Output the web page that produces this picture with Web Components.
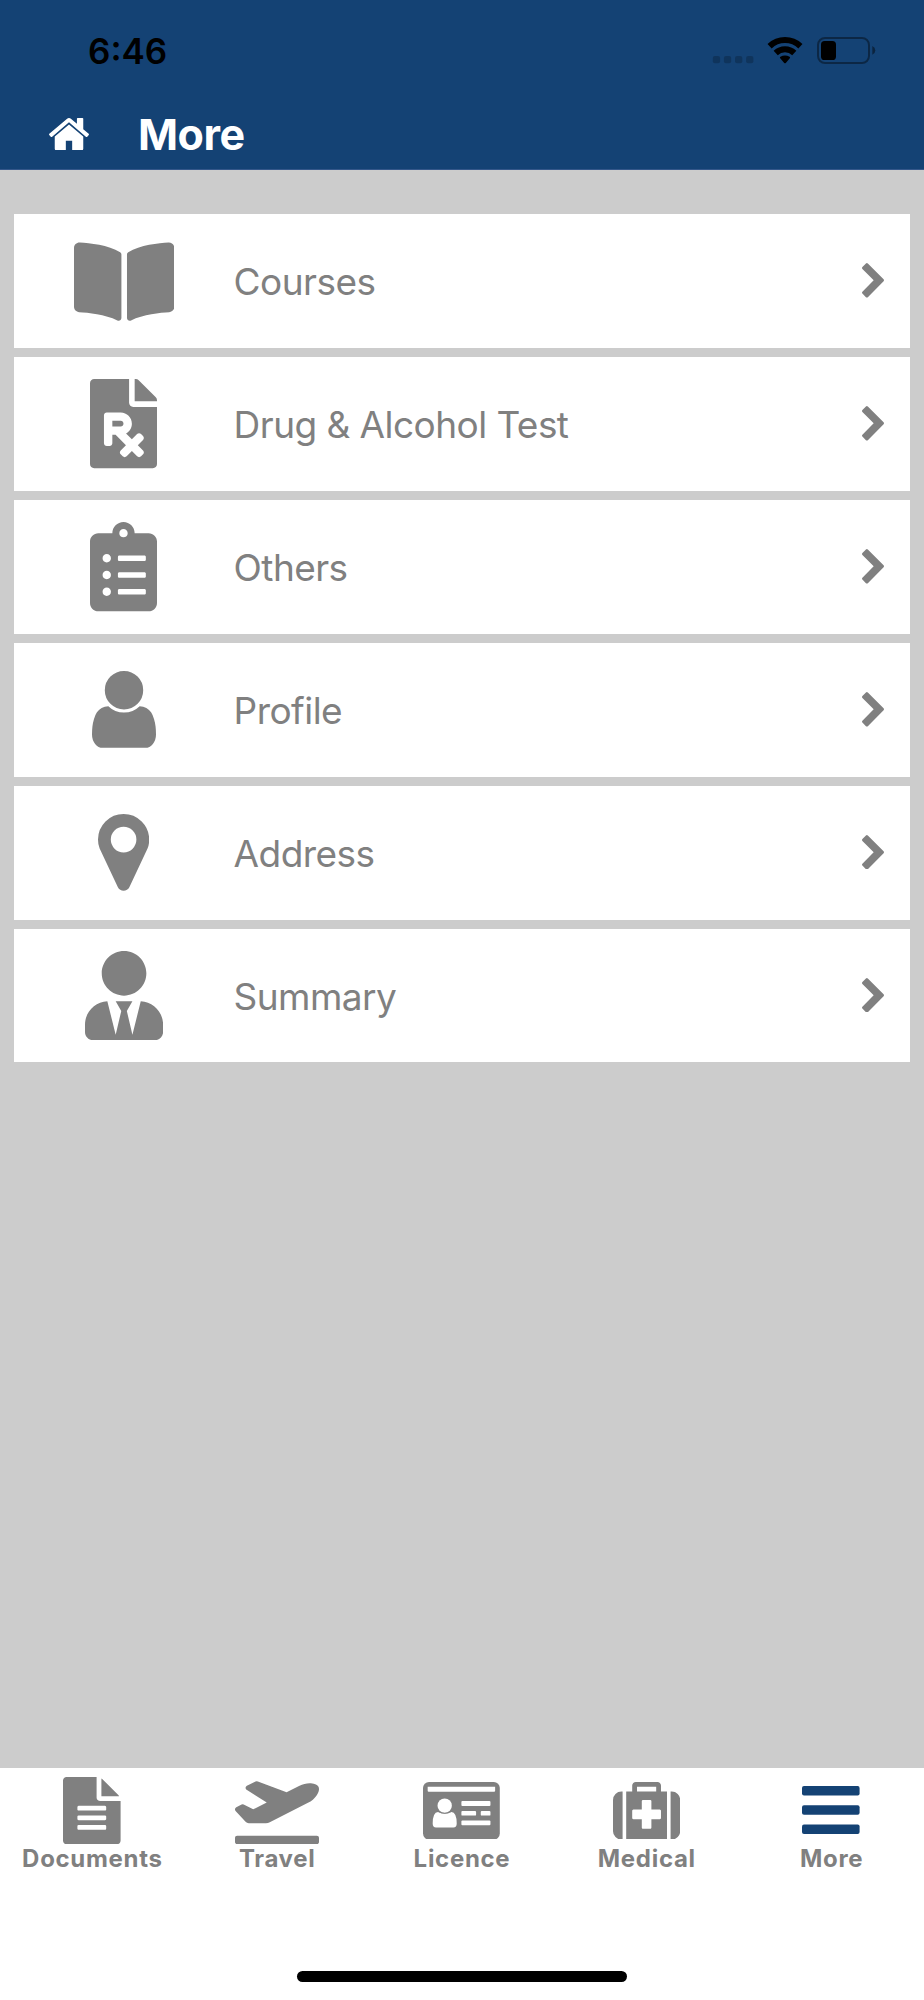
<!DOCTYPE html>
<html lang="en">
<head>
<meta charset="utf-8">
<title>More</title>
<style>
  :root {
    --brand: #144274;
    --page: #cccccc;
    --muted: #808080;
  }
  body {
    margin: 0;
    font-family: Inter, "Liberation Sans", sans-serif;
  }
</style>
</head>
<body>
<app-screen>
  <status-bar slot="header" time="6:46"></status-bar>
  <title-bar slot="header">More</title-bar>

  <menu-row icon="book">Courses</menu-row>
  <menu-row icon="prescription">Drug &amp; Alcohol Test</menu-row>
  <menu-row icon="clipboard">Others</menu-row>
  <menu-row icon="user">Profile</menu-row>
  <menu-row icon="marker">Address</menu-row>
  <menu-row icon="tie">Summary</menu-row>

  <tab-item slot="tabs" icon="document">Documents</tab-item>
  <tab-item slot="tabs" icon="plane">Travel</tab-item>
  <tab-item slot="tabs" icon="card">Licence</tab-item>
  <tab-item slot="tabs" icon="medkit">Medical</tab-item>
  <tab-item slot="tabs" icon="bars" active>More</tab-item>
</app-screen>

<script>
// name: [viewBox, width, height, markup]
const ICONS = {
  home: ['88 253 1616 1283', 40, 32.4, '<path d="M1472 992v480q0 26-19 45t-45 19h-384v-384h-256v384h-384q-26 0-45-19t-19-45v-480q0-1 .5-3t.5-3l575-474 575 474q1 2 1 6zm223-69l-62 74q-8 9-21 11h-3q-13 0-21-7l-692-577-692 577q-12 8-24 7-13-2-21-11l-62-74q-8-10-7-23.5t11-21.5l719-599q32-26 76-26t76 26l244 204v-195q0-14 9-23t23-9h192q14 0 23 9t9 23v408l219 182q10 8 11 21.5t-7 23.5z"/>'],
  chevron: ['346 26 1036 1612', 22, 34.6, '<path d="M1363 877l-742 742q-19 19-45 19t-45-19l-166-166q-19-19-19-45t19-45l531-531-531-531q-19-19-19-45t19-45l166-166q19-19 45-19t45 19l742 742q19 19 19 45t-19 45z"/>'],
  book: ['0 0 576 512', 100.4, 89.3, '<path d="M542.22 32.05c-54.8 3.11-163.72 14.43-230.96 55.59-4.64 2.84-7.27 7.89-7.27 13.17v363.87c0 11.55 12.63 18.85 23.28 13.49 69.18-34.82 169.23-44.32 218.7-46.92 16.89-.89 30.02-14.43 30.02-30.66V62.75c.01-17.71-15.35-31.74-33.77-30.7zM264.73 87.64C197.5 46.48 88.58 35.17 33.78 32.05 15.36 31.01 0 45.04 0 62.75V400.6c0 16.24 13.13 29.78 30.02 30.66 49.49 2.6 149.59 12.11 218.77 46.95 10.62 5.35 23.21-1.94 23.21-13.46V100.63c0-5.29-2.62-10.14-7.27-12.99z"/>'],
  prescription: ['0 0 384 512', 67, 89.3, '<path fill-rule="evenodd" d="M224 136V0H24C10.7 0 0 10.7 0 24v464c0 13.3 10.7 24 24 24h336c13.3 0 24-10.7 24-24V160H248c-13.2 0-24-10.8-24-24zm68.53 179.48l11.31 11.31c6.25 6.25 6.25 16.38 0 22.63l-29.9 29.9L304 409.38c6.25 6.25 6.25 16.38 0 22.63l-11.31 11.31c-6.25 6.25-16.38 6.25-22.63 0L240 413.25l-30.06 30.06c-6.25 6.25-16.38 6.25-22.63 0L176 432c-6.25-6.25-6.25-16.38 0-22.63l30.06-30.06L146.74 320H128v48c0 8.84-7.16 16-16 16H96c-8.84 0-16-7.16-16-16V208c0-8.84 7.16-16 16-16h80c35.35 0 64 28.65 64 64 0 24.22-13.62 45.05-33.46 55.92L240 345.38l29.9-29.9c6.25-6.25 16.38-6.25 22.63 0zM176 272h-48v-32h48c8.82 0 16 7.18 16 16s-7.18 16-16 16zm208-150.1v6.1H256V0h6.1c6.4 0 12.5 2.5 17 7l97.9 98c4.5 4.5 7 10.6 7 16.9z"/>'],
  clipboard: ['0 0 384 512', 67, 89.3, '<path d="M336 64h-80c0-35.3-28.7-64-64-64s-64 28.7-64 64H48C21.5 64 0 85.5 0 112v352c0 26.5 21.5 48 48 48h288c26.5 0 48-21.5 48-48V112c0-26.5-21.5-48-48-48zM96 424c-13.3 0-24-10.7-24-24s10.7-24 24-24 24 10.7 24 24-10.7 24-24 24zm0-96c-13.3 0-24-10.7-24-24s10.7-24 24-24 24 10.7 24 24-10.7 24-24 24zm0-96c-13.3 0-24-10.7-24-24s10.7-24 24-24 24 10.7 24 24-10.7 24-24 24zm96-192c13.3 0 24 10.7 24 24s-10.7 24-24 24-24-10.7-24-24 10.7-24 24-24zm128 368c0 4.4-3.6 8-8 8H168c-4.4 0-8-3.6-8-8v-16c0-4.4 3.6-8 8-8h144c4.4 0 8 3.6 8 8v16zm0-96c0 4.4-3.6 8-8 8H168c-4.4 0-8-3.6-8-8v-16c0-4.4 3.6-8 8-8h144c4.4 0 8 3.6 8 8v16zm0-96c0 4.4-3.6 8-8 8H168c-4.4 0-8-3.6-8-8v-16c0-4.4 3.6-8 8-8h144c4.4 0 8 3.6 8 8v16z"/>'],
  user: ['256 128 1280 1536', 64, 76.8, '<path d="M1536 1399q0 109-62.5 187t-150.5 78h-854q-88 0-150.5-78t-62.5-187q0-85 8.5-160.5t31.5-152 58.5-131 94-89 134.5-34.5q131 128 313 128t313-128q76 0 134.5 34.5t94 89 58.5 131 31.5 152 8.5 160.5zm-256-887q0 159-112.5 271.5t-271.5 112.5-271.5-112.5-112.5-271.5 112.5-271.5 271.5-112.5 271.5 112.5 112.5 271.5z"/>'],
  marker: ['384 128 1024 1536', 51.2, 76.8, '<path d="M1152 640q0-106-75-181t-181-75-181 75-75 181 75 181 181 75 181-75 75-181zm256 0q0 109-33 179l-364 774q-16 33-47.5 52t-67.5 19-67.5-19-46.5-52l-365-774q-33-70-33-179 0-212 150-362t362-150 362 150 150 362z"/>'],
  tie: ['0 0 448 512', 78.1, 89.3, '<path d="M224 256c70.7 0 128-57.3 128-128S294.7 0 224 0 96 57.3 96 128s57.3 128 128 128zm95.8 32.6L272 480l-32-136 32-56h-96l32 56-32 136-47.8-191.4C56.9 292 0 350.3 0 422.4V464c0 26.5 21.5 48 48 48h352c26.5 0 48-21.5 48-48v-41.6c0-72.1-56.9-130.4-128.2-133.8z"/>'],
  document: ['128 0 1536 1792', 57.6, 67.2, '<path d="M1596 476q14 14 28 36h-472v-472q22 14 36 28zm-476 164h544v1056q0 40-28 68t-68 28h-1344q-40 0-68-28t-28-68v-1600q0-40 28-68t68-28h800v544q0 40 28 68t68 28zm160 736v-64q0-14-9-23t-23-9h-704q-14 0-23 9t-9 23v64q0 14 9 23t23 9h704q14 0 23-9t9-23zm0-256v-64q0-14-9-23t-23-9h-704q-14 0-23 9t-9 23v64q0 14 9 23t23 9h704q14 0 23-9t9-23zm0-256v-64q0-14-9-23t-23-9h-704q-14 0-23 9t-9 23v64q0 14 9 23t23 9h704q14 0 23-9t9-23z"/>'],
  plane: ['0 0 640 512', 84, 67.2, '<path d="M624 448H16c-8.84 0-16 7.16-16 16v32c0 8.84 7.16 16 16 16h608c8.84 0 16-7.16 16-16v-32c0-8.84-7.16-16-16-16zM80.55 341.27c6.28 6.84 15.1 10.72 24.33 10.71l130.54-.18a65.62 65.62 0 0 0 29.64-7.12l290.96-147.65c26.74-13.57 50.71-32.94 67.02-58.31 18.31-28.48 20.3-49.09 13.07-63.65-7.21-14.57-24.74-25.27-58.25-27.45-29.85-1.94-59.54 5.92-86.28 19.48l-98.51 49.99-218.7-82.06a17.799 17.799 0 0 0-18-1.11L90.62 67.29c-10.67 5.41-13.25 19.65-5.17 28.53l156.22 98.1-103.21 52.37-72.35-36.47a17.804 17.804 0 0 0-16.07.02L9.91 230.22c-10.44 5.3-13.19 19.12-5.57 28.08l76.21 82.97z"/>'],
  card: ['0 0 230 173', 76.8, 57.6, `
    <rect width="230" height="173" rx="18"/>
    <g fill="#fff">
      <path d="M14 14h202v12q0 3-3 3H17q-3 0-3-3z"/>
      <path d="M45 90q-16 1-16 35 0 12 10 12h52q10 0 10-12 0-34-16-35-20 11-40 0z"/>
      <circle cx="65" cy="71" r="21.5"/>
      <rect x="115" y="57" width="87" height="15" rx="3"/>
      <rect x="115" y="87" width="44" height="14" rx="3"/>
      <rect x="173" y="87" width="29" height="14" rx="3"/>
      <rect x="115" y="116" width="87" height="14" rx="3"/>
    </g>
    <path fill="none" stroke="currentColor" stroke-width="2" d="M46 89q19 11 38 0"/>`],
  medkit: ['0 128 1792 1536', 67.2, 57.6, '<path d="M1280 1088v-192q0-14-9-23t-23-9h-224v-224q0-14-9-23t-23-9h-192q-14 0-23 9t-9 23v224h-224q-14 0-23 9t-9 23v192q0 14 9 23t23 9h224v224q0 14 9 23t23 9h192q14 0 23-9t9-23v-224h224q14 0 23-9t9-23zm-640-704h512v-128h-512v128zm-384 0v1280h-32q-92 0-158-66t-66-158v-832q0-92 66-158t158-66h32zm1184 0v1280h-1088v-1280h160v-160q0-40 28-68t68-28h576q40 0 68 28t28 68v160h160zm352 224v832q0 92-66 158t-158 66h-32v-1280h32q92 0 158 66t66 158z"/>'],
  bars: ['0 0 57.6 48', 57.6, 48, '<rect width="57.6" height="9.6" rx="2"/><rect y="19.2" width="57.6" height="9.6" rx="2"/><rect y="38.4" width="57.6" height="9.6" rx="2"/>'],
};

class AppIcon extends HTMLElement {
  constructor() {
    super();
    this.attachShadow({ mode: 'open' });
  }

  connectedCallback() {
    const [viewBox, width, height, markup] = ICONS[this.getAttribute('name')];
    this.shadowRoot.innerHTML = `
  <style>
  :host {
    display: block;
    flex: none;
  }
  svg {
    display: block;
    fill: currentColor;
  }
  </style>
  <svg viewBox="${viewBox}" width="${width}" height="${height}" preserveAspectRatio="none" aria-hidden="true">${markup}</svg>
  `;
  }
}

class AppScreen extends HTMLElement {
  constructor() {
    super();
    this.attachShadow({ mode: 'open' });
    this.shadowRoot.innerHTML = `
  <style>
  :host {
    display: flex;
    flex-direction: column;
    height: 2000px;
    background: var(--page);
  }
  header {
    box-sizing: border-box;
    height: 170px;
    background: var(--brand);
    border-bottom: 1px solid #34578a;
  }
  main {
    flex: 1;
    display: flex;
    flex-direction: column;
    gap: 9px;
    padding: 44.3px 13.8px 0 14px;
  }
  footer {
    box-sizing: border-box;
    display: flex;
    flex-direction: column;
    align-items: center;
    justify-content: space-between;
    height: 232.2px;
    padding-bottom: 18px;
    background: #fff;
  }
  nav {
    display: grid;
    grid-template-columns: repeat(5, 1fr);
    width: 100%;
  }
  .indicator {
    width: 330px;
    height: 11px;
    border-radius: 6px;
    background: #000;
  }
  </style>
  <header><slot name="header"></slot></header>
  <main><slot></slot></main>
  <footer>
    <nav><slot name="tabs"></slot></nav>
    <div class="indicator"></div>
  </footer>
  `;
  }
}

class StatusBar extends HTMLElement {
  constructor() {
    super();
    this.attachShadow({ mode: 'open' });
  }

  connectedCallback() {
    this.shadowRoot.innerHTML = `
  <style>
  :host {
    box-sizing: border-box;
    display: flex;
    align-items: center;
    justify-content: space-between;
    height: 101px;
    padding: 0 48px 0 88px;
    color: #000;
  }
  .time {
    font-size: 35px;
    font-weight: 600;
    line-height: 40px;
  }
  svg {
    display: block;
  }
  </style>
  <span class="time">${this.getAttribute('time') ?? ''}</span>
  <svg width="164" height="30" viewBox="712 36 164 30" aria-hidden="true">
    <g opacity=".2">
      <rect x="712.8" y="56" width="7.3" height="7.2" rx="2"/>
      <rect x="723.9" y="56" width="7.3" height="7.2" rx="2"/>
      <rect x="735" y="56" width="7.3" height="7.2" rx="2"/>
      <rect x="746.1" y="56" width="7.3" height="7.2" rx="2"/>
    </g>
    <g fill="none" stroke="#000" stroke-width="6">
      <path d="M769.6 46.2a22.4 22.4 0 0 1 30.8 0"/>
      <path d="M775.7 53a13.5 13.5 0 0 1 18.6 0"/>
    </g>
    <path d="M780.2 58.3q-.8-.9.2-1.5 4.6-2.6 9.2 0 1 .6.2 1.5l-4 4.6q-.8.9-1.6 0z"/>
    <rect x="818" y="38" width="51" height="25" rx="7" fill="none" stroke="#000" stroke-width="2" opacity=".4"/>
    <rect x="821" y="41" width="15" height="19" rx="3.6"/>
    <path d="M872.3 46q3 1.5 3 4.4t-3 4.4z" opacity=".45"/>
  </svg>
  `;
  }
}

class TitleBar extends HTMLElement {
  constructor() {
    super();
    this.attachShadow({ mode: 'open' });
    this.shadowRoot.innerHTML = `
  <style>
  :host {
    display: flex;
    align-items: center;
    gap: 49px;
    height: 66px;
    padding-left: 49px;
    color: #fff;
    font-size: 43px;
    font-weight: 700;
    line-height: 50px;
    letter-spacing: -.5px;
  }
  </style>
  <app-icon name="home"></app-icon>
  <span><slot></slot></span>
  `;
  }
}

class MenuRow extends HTMLElement {
  constructor() {
    super();
    this.attachShadow({ mode: 'open' });
  }

  connectedCallback() {
    this.shadowRoot.innerHTML = `
  <style>
  :host {
    box-sizing: border-box;
    display: grid;
    grid-template-columns: 219.6px 1fr auto;
    align-items: center;
    height: 133.87px;
    padding-right: 26.2px;
    background: #fff;
    color: var(--muted);
    font-size: 37px;
    line-height: 44px;
    letter-spacing: -.55px;
  }
  .icon {
    display: flex;
    justify-content: center;
  }
  .label {
    padding-top: 2px;
  }
  app-icon[name="chevron"] {
    padding-bottom: 1px;
  }
  </style>
  <span class="icon"><app-icon name="${this.getAttribute('icon')}"></app-icon></span>
  <span class="label"><slot></slot></span>
  <app-icon name="chevron"></app-icon>
  `;
  }
}

class TabItem extends HTMLElement {
  constructor() {
    super();
    this.attachShadow({ mode: 'open' });
  }

  connectedCallback() {
    this.shadowRoot.innerHTML = `
  <style>
  :host {
    display: flex;
    flex-direction: column;
    align-items: center;
    color: var(--muted);
    font-size: 24px;
    font-weight: 700;
    line-height: 30px;
    letter-spacing: .7px;
  }
  .icon {
    display: flex;
    align-items: center;
    height: 77px;
    padding: 4px 1px 0 0;
    margin-bottom: -5px;
  }
  :host([active]) .icon {
    color: var(--brand);
  }
  </style>
  <span class="icon"><app-icon name="${this.getAttribute('icon')}"></app-icon></span>
  <span><slot></slot></span>
  `;
  }
}

customElements.define('app-icon', AppIcon);
customElements.define('app-screen', AppScreen);
customElements.define('status-bar', StatusBar);
customElements.define('title-bar', TitleBar);
customElements.define('menu-row', MenuRow);
customElements.define('tab-item', TabItem);
</script>
</body>
</html>
